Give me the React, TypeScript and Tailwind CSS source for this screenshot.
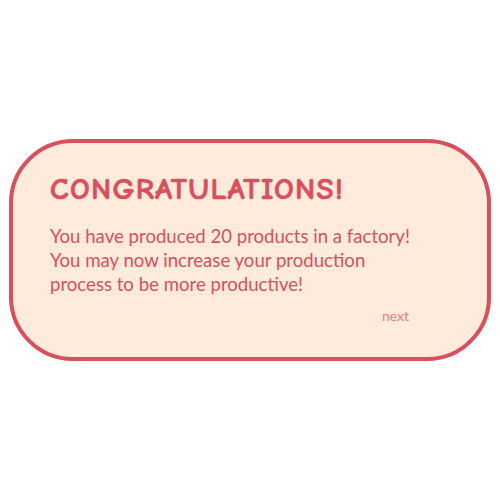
import React from "react";

const App: React.FC = () => {
  return (
    <div className="w-[500px] h-[500px] bg-white flex items-center justify-center">
      <div className="w-[482px] h-[222px] rounded-[64px] border-4 border-[#d94f5c] bg-[#ffebdb] pl-[37px] pr-[78px] pt-[28px] flex flex-col">
        <h1
          className="text-[31px] leading-[36px] font-bold text-[#d94f5c] tracking-[1.3px] whitespace-nowrap [-webkit-text-stroke:0.7px_#d94f5c]"
          style={{ fontFamily: '"Comic Neue", "Comic Sans MS", "Lato", sans-serif' }}
        >
          CONGRATULATIONS!
        </h1>
        <p className="mt-[17px] text-[18.6px] leading-[24px] text-[#d94f5c] whitespace-nowrap font-['Lato',sans-serif]">
          You have produced 20 products in a factory!
          <br />
          You may now increase your production
          <br />
          process to be more productive!
        </p>
        <div className="mt-[12px] self-end text-[14px] leading-[16px] text-[#e57d88] font-['Lato',sans-serif]">
          next
        </div>
      </div>
    </div>
  );
};

export default App;
